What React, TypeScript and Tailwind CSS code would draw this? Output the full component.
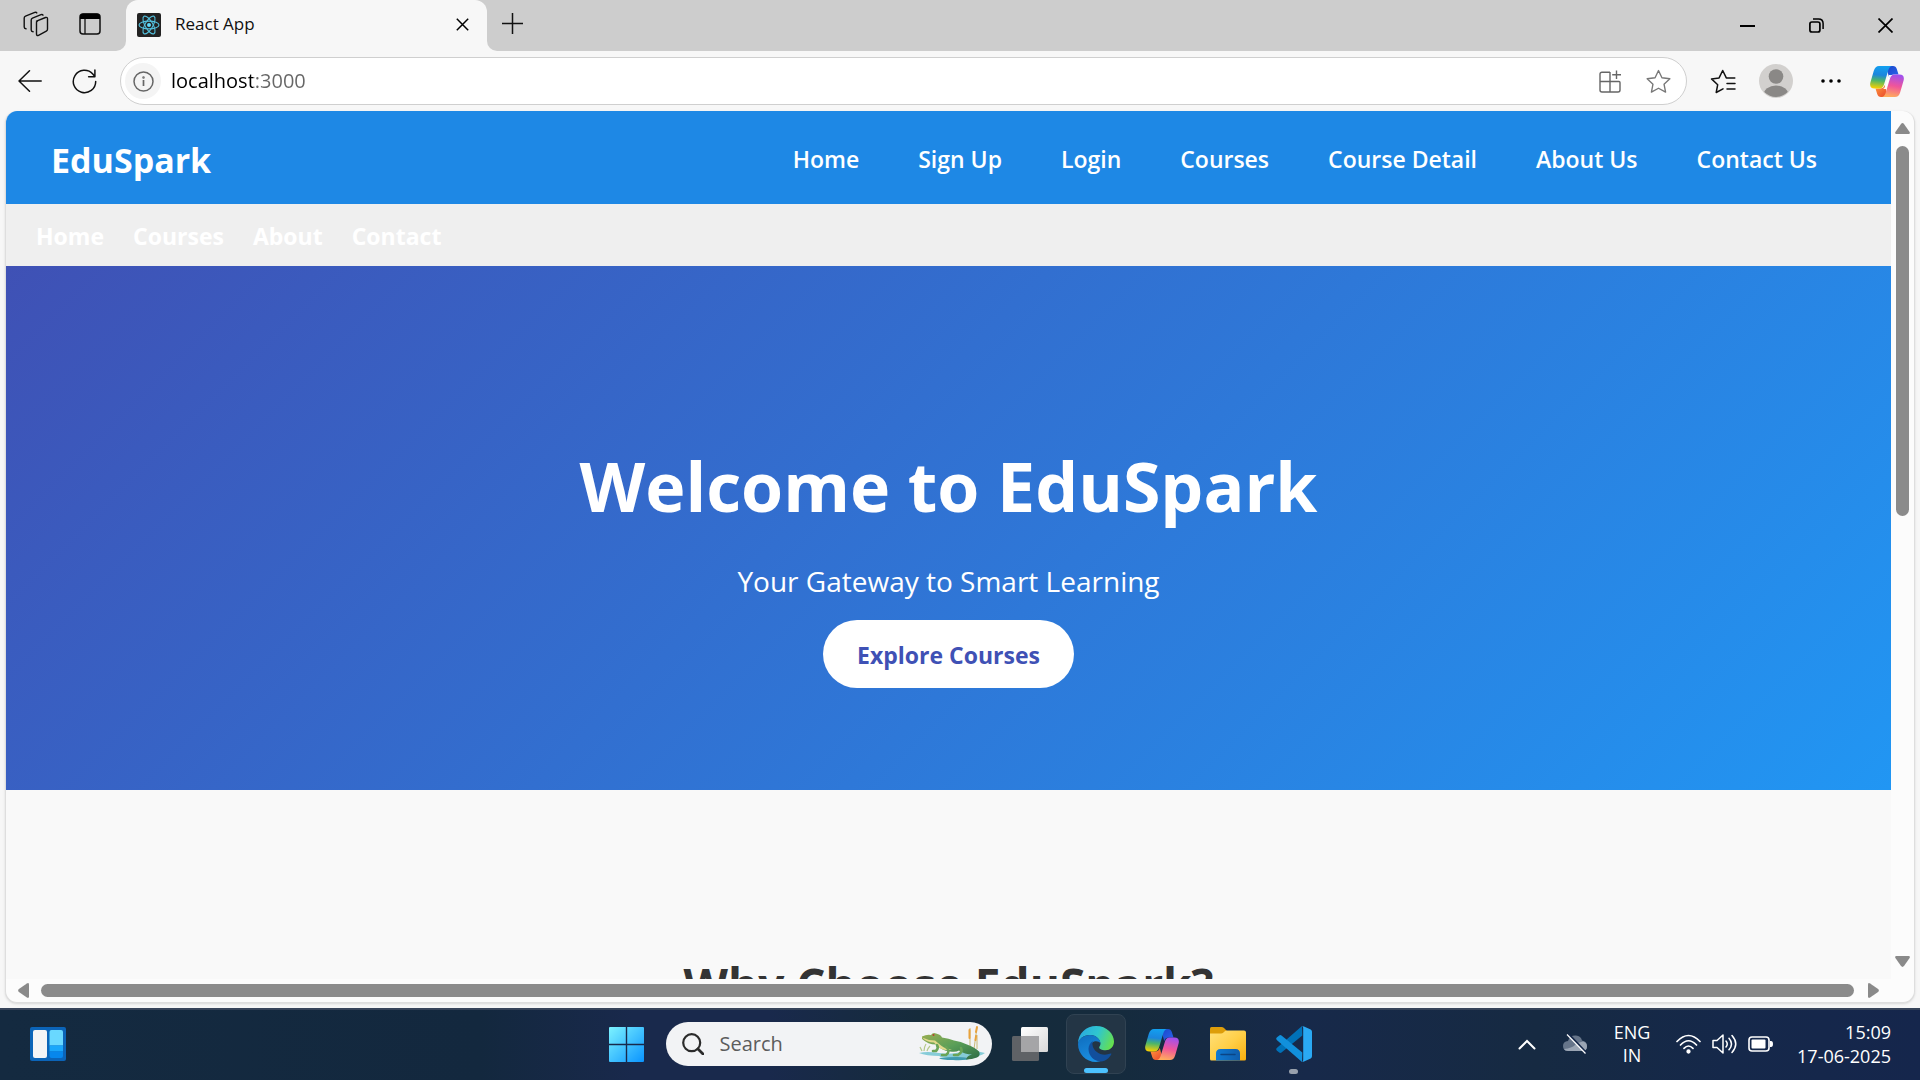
import type { ReactNode } from "react";

type IconButtonProps = { label: string; className: string; children: ReactNode };

function IconButton({ label, className, children }: IconButtonProps) {
  return (
    <button type="button" aria-label={label} className={`flex shrink-0 items-center justify-center ${className}`}>
      {children}
    </button>
  );
}

function CopilotLogo({ id }: { id: string }) {
  return (
    <svg width="34" height="31" viewBox="0 0 34 31" aria-hidden="true">
      <defs>
        <linearGradient id={`${id}-a`} x1="0.5" y1="0" x2="0.4" y2="1">
          <stop offset="0" stopColor="#12a0f0" />
          <stop offset="0.4" stopColor="#1b86dd" />
          <stop offset="0.65" stopColor="#4cb56a" />
          <stop offset="1" stopColor="#f8d000" />
        </linearGradient>
        <linearGradient id={`${id}-b`} x1="0.6" y1="0" x2="0.4" y2="1">
          <stop offset="0" stopColor="#a050ee" />
          <stop offset="0.5" stopColor="#f0559a" />
          <stop offset="1" stopColor="#ffad5c" />
        </linearGradient>
        <linearGradient id={`${id}-c`} x1="0" y1="0" x2="1" y2="1">
          <stop offset="0" stopColor="#1a45c8" />
          <stop offset="1" stopColor="#2a66ee" />
        </linearGradient>
        <linearGradient id={`${id}-d`} x1="0" y1="0" x2="1" y2="1">
          <stop offset="0" stopColor="#ff9a3c" />
          <stop offset="1" stopColor="#e8432e" />
        </linearGradient>
      </defs>
      <path d="M16 0h7c2 0 3.200 1.200 3.800 3l1.700 5.500h-4.500c-2.500 0-4 1-4.800 3.500z" fill={`url(#${id}-c)`} />
      <path d="M18 31h-7c-2 0-3.200-1.200-3.800-3L5.500 22.500H10c2.500 0 4-1 4.800-3.500z" fill={`url(#${id}-d)`} />
      <path d="M9 0h13c-2 .4-3 2-3.700 4.300L14 18.500c-.8 2.700-2.200 4-4.600 4H4.500C.8 22.500-.5 20 .4 16.500L3.800 4.800C4.800 1.500 6.500 0 9 0z" fill={`url(#${id}-a)`} />
      <path d="M25 31H12c2-.4 3-2 3.700-4.300L20 12.500c.8-2.700 2.200-4 4.600-4h4.900c3.700 0 5 2.500 4.100 6l-3.400 11.700C29.200 29.500 27.500 31 25 31z" fill={`url(#${id}-b)`} />
      <path d="M19 9h3q-1.800.8-2.400 2.800L16 23q-.4 0-3 0 1.500-.8 2.200-2.800z" fill="#fff" fillOpacity={id === "cp-toolbar" ? 0.95 : 0} />
    </svg>
  );
}

function ReactFavicon() {
  return (
    <svg width="24" height="24" viewBox="0 0 24 24" className="shrink-0" aria-hidden="true">
      <rect width="24" height="24" rx="2" fill="#222" />
      <g fill="none" stroke="#53c1de" strokeWidth="1.1">
        <ellipse cx="12" cy="12" rx="10" ry="3.900" />
        <ellipse cx="12" cy="12" rx="10" ry="3.900" transform="rotate(60 12 12)" />
        <ellipse cx="12" cy="12" rx="10" ry="3.900" transform="rotate(120 12 12)" />
      </g>
      <circle cx="12" cy="12" r="2" fill="#61dafb" />
    </svg>
  );
}

function TitleBar() {
  return (
    <div className="flex h-[51px] shrink-0 items-stretch bg-[#cdcdcd]">
      <div className="flex w-[126px] shrink-0 items-center gap-[22px] rounded-br-[10px] bg-[#cdcdcd] pb-[3px] pl-5">
        <IconButton label="Workspaces" className="size-8">
          <svg width="26" height="26" viewBox="0 0 26 26" fill="none" stroke="#111" strokeWidth="1.400" strokeLinejoin="round" strokeLinecap="round">
            <path d="M13.500 10.200 22.500 6.500q2-.6 2 1.300v10.500q0 1.200-1.200 1.800l-7.800 4.200q-2 .8-2-1.200V11.500q0-1 1-1.400z" />
            <path d="M20 4.200q-.6-1-2-.5L9.500 7.200Q8.200 7.800 8.200 9v10q0 1.600 1.900 1.700" />
            <path d="M14.800 1.700q-.6-1-2-.5L3.500 5Q2.200 5.500 2.200 6.700v9q0 1.700 1.800 1.900" transform="translate(-1 .2)" />
          </svg>
        </IconButton>
        <IconButton label="Tab actions" className="size-8">
          <svg width="22" height="22" viewBox="0 0 22 22">
            <rect x="1" y="1" width="20" height="20" rx="3" fill="none" stroke="#111" strokeWidth="1.500" />
            <path d="M1 6V4q0-3.500 3.500-3.500h13Q21 .5 21 4v2z" fill="#000" />
            <path d="M6 6v15" stroke="#111" strokeWidth="1.300" />
          </svg>
        </IconButton>
      </div>
      <div className="-ml-3 flex bg-[#f7f7f7]">
        <div className="w-3 rounded-br-[10px] bg-[#cdcdcd]" />
      </div>
      <div className="bg-[#cdcdcd]">
        <div className="flex h-full w-[361px] items-center rounded-t-[12px] bg-[#f7f7f7] pr-[13px] pb-[2px] pl-[11px]">
          <ReactFavicon />
          <span className="ml-[14px] flex-1 pb-px text-[17px] leading-6 text-[#111]">React App</span>
          <IconButton label="Close tab" className="size-6">
            <svg width="13" height="13" viewBox="0 0 13 13" stroke="#000" strokeWidth="1.500">
              <path d="m.8.8 11.400 11.400M12.200.8.800 12.200" />
            </svg>
          </IconButton>
        </div>
      </div>
      <div className="flex flex-1 bg-[#f7f7f7]">
        <div className="flex flex-1 items-center rounded-bl-[10px] bg-[#cdcdcd] pl-[9px]">
          <IconButton label="New tab" className="size-8 pb-1">
            <svg width="21" height="21" viewBox="0 0 21 21" stroke="#111" strokeWidth="1.500">
              <path d="M10.500 0v21M0 10.500h21" />
            </svg>
          </IconButton>
          <div className="ml-auto flex">
            <IconButton label="Minimize" className="h-[50px] w-[69px]">
              <svg width="15" height="2"><rect width="15" height="2" /></svg>
            </IconButton>
            <IconButton label="Restore" className="h-[50px] w-[69px]">
              <svg width="15" height="15" viewBox="0 0 15 15" fill="none" stroke="#000" strokeWidth="1.700">
                <rect x=".9" y="4" width="10" height="10" rx="2" />
                <path d="M4 1h5.500q4.600 0 4.600 4.600V11" strokeWidth="1.500" />
              </svg>
            </IconButton>
            <IconButton label="Close" className="h-[50px] w-[69px]">
              <svg width="15" height="15" viewBox="0 0 15 15" stroke="#000" strokeWidth="1.700">
                <path d="m.5.5 14 14m0-14-14 14" />
              </svg>
            </IconButton>
          </div>
        </div>
      </div>
    </div>
  );
}

const starPath = "m12 1.500 3.300 6.900 7.600 1-5.600 5.200 1.500 7.600-6.800-3.700-6.800 3.700 1.500-7.600L1.100 9.400l7.600-1z";

function Toolbar() {
  return (
    <div className="flex h-[60px] shrink-0 items-center bg-[#f7f7f7] pr-[15px] pl-[14px]">
      <IconButton label="Back" className="size-8">
        <svg width="24" height="22" viewBox="0 0 24 22" fill="none" stroke="#111" strokeWidth="1.500" strokeLinecap="round" strokeLinejoin="round">
          <path d="M23.200 11H1M11.500.8 1 11l10.500 10.200" />
        </svg>
      </IconButton>
      <IconButton label="Refresh" className="ml-[22px] size-8">
        <svg width="25" height="25" viewBox="0 0 25 25" fill="none" stroke="#111" strokeWidth="1.500" strokeLinecap="round" strokeLinejoin="round">
          <path d="M23.700 12.500A11.200 11.200 0 1 1 20.800 5L22.800 7.500M22.900 1v6.800h-6.300" />
        </svg>
      </IconButton>
      <div className="ml-5 flex h-12 flex-1 items-center rounded-full border border-[#cfcfcf] bg-white pr-3 pl-1">
        <IconButton label="View site information" className="size-9 rounded-full bg-[#f4f4f4]">
          <svg width="21" height="21" viewBox="0 0 21 21" fill="none" stroke="#666" strokeWidth="1.500">
            <circle cx="10.500" cy="10.500" r="9.500" />
            <path d="M10.500 9v6" strokeWidth="1.700" />
            <circle cx="10.500" cy="6.500" r=".5" />
          </svg>
        </IconButton>
        <input
          aria-label="Address"
          defaultValue="localhost:3000"
          className="ml-[10px] min-w-0 flex-1 bg-[linear-gradient(to_right,#000_82px,#666_82px)] bg-clip-text text-[20px] leading-7 text-transparent outline-none"
        />
        <IconButton label="App available" className="size-8">
          <svg width="23" height="23" viewBox="0 0 23 23" fill="none" stroke="#666" strokeWidth="1.400">
            <path d="M11 2.200H3q-2 0-2 2V20q0 2 2 2h16q2 0 2-2v-7.500q0-1-1-1H1M11 1.900V22M17.500.5v8.600M13.200 4.800H22" />
          </svg>
        </IconButton>
        <IconButton label="Add to favorites" className="ml-4 size-8">
          <svg width="25" height="25" viewBox="0 0 24 24" fill="none" stroke="#777" strokeWidth="1.300" strokeLinejoin="round"><path d={starPath} /></svg>
        </IconButton>
      </div>
      <IconButton label="Favorites" className="ml-[18px] size-9">
        <svg width="26" height="25" viewBox="0 0 26 25" fill="none" stroke="#111" strokeWidth="1.500" strokeLinejoin="round" strokeLinecap="round">
          <path d="M13 19.800 6.200 23.500l1.500-7.800L1.500 9.900l7.600-1L12.700 1.500l3.600 7.400h8.500M17 14.500h8M17 20h8" />
        </svg>
      </IconButton>
      <IconButton label="Profile" className="ml-[17px] size-9">
        <svg width="34" height="34" viewBox="0 0 34 34">
          <clipPath id="avatar"><circle cx="17" cy="17" r="16" /></clipPath>
          <circle cx="17" cy="17" r="17" fill="#d2d0ce" />
          <circle cx="17" cy="12.500" r="7.300" fill="#8a8886" />
          <ellipse cx="17" cy="31" rx="12.500" ry="9.500" fill="#8a8886" clipPath="url(#avatar)" />
        </svg>
      </IconButton>
      <IconButton label="Settings and more" className="ml-[19px] size-9">
        <svg width="20" height="4" viewBox="0 0 20 4"><circle cx="2" cy="2" r="1.800" /><circle cx="10" cy="2" r="1.800" /><circle cx="18" cy="2" r="1.800" /></svg>
      </IconButton>
      <IconButton label="Copilot" className="ml-5 size-9"><CopilotLogo id="cp-toolbar" /></IconButton>
    </div>
  );
}

const mainLinks = ["Home", "Sign Up", "Login", "Courses", "Course Detail", "About Us", "Contact Us"];
const subLinks = ["Home", "Courses", "About", "Contact"];

function WebPage() {
  return (
    <div className="min-w-0 flex-1 overflow-hidden bg-[#f9f9f9]">
      <header className="flex h-[93px] items-center justify-between bg-[#1e88e5] pr-[74px] pl-[45px] text-white">
        <a href="#home" className="pt-1 text-[34px] leading-[44px] font-bold">EduSpark</a>
        <nav aria-label="Main" className="pt-[3px]">
          <ul className="flex gap-[59px]">
            {mainLinks.map((t) => (
              <li key={t}><a href="#page" className="text-[23px] leading-8 font-semibold">{t}</a></li>
            ))}
          </ul>
        </nav>
      </header>
      <nav aria-label="Secondary" className="h-[62px] bg-[#efefef] pt-4 pl-[30px]">
        <ul className="flex gap-[29px]">
          {subLinks.map((t) => (
            <li key={t}><a href="#page" className="text-[23px] leading-8 font-bold text-white">{t}</a></li>
          ))}
        </ul>
      </nav>
      <section className="flex h-[524px] flex-col items-center bg-[linear-gradient(135deg,#3f51b5,#2196f3)] pt-[172px] text-center text-white">
        <h1 className="text-[68px] leading-[96px] font-bold">Welcome to EduSpark</h1>
        <p className="mt-[27px] text-[28px] leading-10">Your Gateway to Smart Learning</p>
        <a href="#courses" className="mt-[19px] rounded-full bg-white px-[34px] pt-[19px] pb-[17px] text-[23px] leading-8 font-bold text-[#3f51b5]">Explore Courses</a>
      </section>
      <section className="pt-[162px] text-center">
        <h2 className="text-[46px] leading-[64px] font-bold text-[#333]">Why Choose EduSpark?</h2>
      </section>
    </div>
  );
}

function Arrow({ turn }: { turn: string }) {
  return (
    <svg width="15" height="11" viewBox="0 0 15 11" className={`shrink-0 ${turn}`} aria-hidden="true">
      <path d="M6 .9q1.500-1.600 3 0l5.600 8q.9 2-1 2.100H1.400q-1.900-.1-1-2.100z" fill="#8a8a8a" />
    </svg>
  );
}

function Viewport() {
  return (
    <div className="min-h-0 flex-1 bg-[#f7f7f7] px-[5px] pb-[5px]">
      <div className="flex h-full flex-col overflow-hidden rounded-xl border-x border-b border-[#dedede] bg-[#fcfcfc] shadow-sm">
        <div className="flex min-h-0 flex-1">
          <WebPage />
          <div className="flex w-[23px] shrink-0 flex-col items-center pt-3 pb-3">
            <Arrow turn="rotate-0" />
            <div className="mt-3 w-[13px] flex-[370] rounded-full bg-[#8b8b8b]" />
            <div className="flex-[440]" />
            <Arrow turn="rotate-180" />
          </div>
        </div>
        <div className="flex h-[23px] shrink-0 items-center pr-[33px] pl-[10px]">
          <Arrow turn="-rotate-90" />
          <div className="mr-3 ml-[10px] h-[13px] flex-1 rounded-full bg-[#8b8b8b]" />
          <Arrow turn="rotate-90" />
        </div>
      </div>
    </div>
  );
}

function Crocodile() {
  return (
    <svg width="68" height="38" viewBox="0 0 68 38" className="shrink-0" aria-hidden="true">
      <defs>
        <linearGradient id="croc" x1="0" y1="0" x2="1" y2="1">
          <stop offset="0" stopColor="#9aae52" /><stop offset=".5" stopColor="#5a9f58" /><stop offset="1" stopColor="#2e6b45" />
        </linearGradient>
      </defs>
      <path d="M1 28q8-2 20 0t22-1 24 1q-6 4-14 3-6 2-22 2-12-1-9-2Q8 31 1 28z" fill="#86ccd8" />
      <path d="M21 33q18-2 34 0-8 3-20 2-12 0-14-2z" fill="#3f9bb0" />
      <path d="M6 26q0-4 2-7m1 7q1-3 3-5m-8 5-2-4" stroke="#b5c98a" strokeWidth="1.200" fill="none" />
      <path d="M52 22V3M56 24 59 2M59 24V10" stroke="#c9b878" strokeWidth="1" fill="none" />
      <path d="M51.500 5v8M59 2l-1 5M58 11l-.5 4" stroke="#e8a23c" strokeWidth="2" strokeLinecap="round" />
      <path d="M4 11.500q5-2.500 9-1.500 2-3 5-1.500 5 1 6 4 7 1 12 3 7 1 13 4 8 3 12 7 2 4-2 6-5 2-11 2 1-4 6-5-7 0-13-4-3 2-9 1-9-1-14-7-8 0-14-5.500z" fill="url(#croc)" />
      <path d="M4 12.500q6 3 13 3l6 5q5 4 11 4-8 2-13-2l-5-5q-7 0-12-5z" fill="#e3d98c" />
      <path d="M19 20q2 3-1 6h-3M28 22q5 4 0 8h-4M43 23q2 4-3 7h-4" stroke="#6aa458" strokeWidth="2.600" fill="none" strokeLinecap="round" />
      <circle cx="15.500" cy="10" r="1" fill="#b8402e" />
    </svg>
  );
}

function EdgeLogo() {
  return (
    <svg width="36" height="36" viewBox="0 0 36 36" aria-hidden="true">
      <defs>
        <linearGradient id="edge-top" x1="0" y1=".3" x2="1" y2=".6">
          <stop offset="0" stopColor="#2aa9e0" /><stop offset=".5" stopColor="#2fc6cf" /><stop offset="1" stopColor="#66e04e" />
        </linearGradient>
        <linearGradient id="edge-left" x1="0" y1="0" x2=".4" y2="1">
          <stop offset="0" stopColor="#0f6cbd" /><stop offset="1" stopColor="#1a8ee0" />
        </linearGradient>
      </defs>
      <path d="M0 18C0 7 8.500 0 18 0c11 0 18 8 18 15.500 0 5-3.500 8.800-8.500 8.800-4 0-6.300-1.500-6.300-2.700 0-1 1.300-1.400 1.300-4 0-3.500-4-8.500-10.500-8.500C5.500 9 1 13 0 18z" fill="url(#edge-top)" />
      <path d="M0 18C.5 12.500 6 9 12 9c6.500 0 10.500 5 10.500 8.500-2-3.500-10-3.500-10 4.500 0 7 6 12 12 12-2 1.300-4.500 2-6.500 2C8 36 0 28 0 18z" fill="url(#edge-left)" />
      <path d="M15 15c-3 1.500-4.500 5-4.500 8 0 7 6 12.500 12.500 12.500 5 0 8.500-4 10.300-7.200.3-.7-.2-1-.7-.8C24 31 15.500 26 14.500 19c-.2-1.500 0-3 .5-4z" fill="#124f9c" />
    </svg>
  );
}

function Taskbar() {
  return (
    <footer className="grid h-[72px] shrink-0 grid-cols-[1fr_auto_1fr] items-center border-t-2 border-[#37445a] bg-[linear-gradient(90deg,#142a40_0%,#13283e_25%,#19294c_33%,#19294c_40%,#152b3b_48%,#152b3d_58%,#17294a_68%,#162a42_80%,#15284a_90%,#15264c_100%)] pb-[2px] text-white">
      <div className="pl-[30px]">
        <IconButton label="Widgets" className="h-[34px] w-9">
          <svg width="36" height="34" viewBox="0 0 36 34">
            <rect width="36" height="34" rx="2" fill="#0b64b8" />
            <rect x="3" y="3" width="14" height="28" rx="2" fill="#f4f4f6" />
            <path d="M19.500 5q0-2 2-2h9.500q2 0 2 2v13.500H19.500z" fill="#69d8ff" />
            <path d="M19.500 18.500H33v6H19.500z" fill="#1aa7fb" />
            <path d="M19.500 24.500H33V29q0 2-2 2h-9.500q-2 0-2-2z" fill="#0787ec" />
          </svg>
        </IconButton>
      </div>
      <div className="flex items-center">
        <IconButton label="Start" className="size-[60px]">
          <svg width="35" height="35" viewBox="0 0 35 35">
            <defs><linearGradient id="win" x1="0" y1="0" x2="35" y2="35" gradientUnits="userSpaceOnUse"><stop stopColor="#7df3ff" /><stop offset="1" stopColor="#0a94ff" /></linearGradient></defs>
            <path d="M1 0h15.800v16.800H0V1q0-1 1-1zM18.200 0H34q1 0 1 1v15.800H18.200zM0 18.200h16.800V35H1q-1 0-1-1zM18.200 18.200H35V34q0 1-1 1H18.200z" fill="url(#win)" />
          </svg>
        </IconButton>
        <label className="mr-2 ml-[9px] flex h-11 w-[326px] items-center rounded-full bg-[#f2f3f5] pr-[6px] pl-4">
          <svg width="22" height="22" viewBox="0 0 22 22" fill="none" stroke="#2b2b2b" strokeWidth="2.200" className="shrink-0" strokeLinecap="round">
            <circle cx="9.700" cy="9.700" r="8.500" /><path d="m16 16 5 5" strokeWidth="2.800" />
          </svg>
          <input type="text" aria-label="Search" placeholder="Search" className="ml-4 min-w-0 flex-1 text-[20px] leading-7 text-[#222] outline-none placeholder:text-[#5c5c5c]" />
          <Crocodile />
        </label>
        <div className="flex gap-[6px]">
          <IconButton label="Task view" className="size-[60px]">
            <svg width="36" height="34" viewBox="0 0 36 34">
              <defs><linearGradient id="tv" x1="0" y1="0" x2="1" y2="1"><stop stopColor="#fff" /><stop offset="1" stopColor="#d8d8d8" /></linearGradient></defs>
              <rect y="9" width="27" height="25" rx="1.500" fill="#5f6266" />
              <rect x="9" width="27" height="25" rx="1.500" fill="url(#tv)" />
              <path d="M9 9h18v16H9z" fill="#a5a5a7" />
            </svg>
          </IconButton>
          <IconButton label="Microsoft Edge" className="relative size-[60px] rounded-lg border border-[#304252] bg-[#233545]">
            <EdgeLogo />
            <span className="absolute bottom-0 h-[5px] w-6 rounded-full bg-[#4cc2ff]" />
          </IconButton>
          <IconButton label="Copilot" className="size-[60px]"><CopilotLogo id="cp-task" /></IconButton>
          <IconButton label="File Explorer" className="size-[60px]">
            <svg width="36" height="34" viewBox="0 0 36 34">
              <defs>
                <linearGradient id="fold" x1="0" y1="0" x2="1" y2="1"><stop stopColor="#ffe07a" /><stop offset=".5" stopColor="#ffcf48" /><stop offset="1" stopColor="#f9ae0c" /></linearGradient>
                <linearGradient id="tray" x1="0" y1="0" x2="1" y2="0"><stop stopColor="#0f7bd4" /><stop offset="1" stopColor="#0f5cab" /></linearGradient>
              </defs>
              <path d="M0 1.500Q0 0 1.500 0h10q1.500 0 2.500 1l2.500 2.500V9H0z" fill="#dd9d0a" />
              <path d="M0 6.500h11q1.500 0 2.500-1l1-1q1-1 2.500-1h17q2 0 2 2V32q0 1.500-1.500 1.500h-33Q0 33.500 0 32z" fill="url(#fold)" />
              <path d="M6 33.500v-7q0-4.500 4.500-4.500h15q4.500 0 4.500 4.500v7z" fill="url(#tray)" />
              <path d="M11 27.500h14" stroke="#0b4484" strokeWidth="1.500" strokeLinecap="round" />
            </svg>
          </IconButton>
          <IconButton label="Visual Studio Code" className="relative size-[60px]">
            <svg width="36" height="36" viewBox="0 0 36 36">
              <path d="m26 0 .3 9.500L5.500 26.600q-1.200.9-2.300 0L.8 24.500q-1.200-1.200 0-2.400z" fill="#0071b8" />
              <path d="m26 36 .3-9.500L5.500 9.400q-1.200-.9-2.300 0L.8 11.500q-1.200 1.200 0 2.400z" fill="#1190dc" />
              <path d="M26.200 35.800Q27.200 35 27.200 34V2q0-1-1-1.800Q27 0 28 .4l6.700 3.200Q36 4.300 36 5.700v24.600q0 1.400-1.300 2.100L28 35.600q-1 .4-1.800.2z" fill="#2aa9f4" />
            </svg>
            <span className="absolute bottom-0 h-[5px] w-[9px] rounded-full bg-[#98a0ac]" />
          </IconButton>
        </div>
      </div>
      <div className="flex items-center justify-end pr-[29px]">
        <IconButton label="Show hidden icons" className="size-8">
          <svg width="18" height="11" viewBox="0 0 18 11" fill="none" stroke="#fff" strokeWidth="2" strokeLinecap="round"><path d="m1.500 9.500 7.500-7.500 7.500 7.500" /></svg>
        </IconButton>
        <IconButton label="OneDrive" className="ml-4 size-8">
          <svg width="26" height="22" viewBox="0 0 26 22">
            <path d="M6 8q2-6 8-5.500 5 .5 6 5 5 .8 5 5.500 0 5-5 5H6q-5 0-5-5 0-4.500 5-5z" fill="#66758a" />
            <path d="M2 16q8-1 11-4 3-3 8-3.500 4 1 4 5 0 4.500-5 4.500H6q-3 0-4-2z" fill="#9aa5b4" />
            <path d="m6.500 1 18 19" stroke="#15284a" strokeWidth="2" /><path d="m5 1.500 18.500 19" stroke="#fff" strokeWidth="1.200" />
          </svg>
        </IconButton>
        <button type="button" className="ml-[21px] w-10 text-center text-[18px] leading-[23px]">ENG<br />IN</button>
        <button type="button" aria-label="Network, volume and battery" className="ml-6 flex items-center gap-[11px]">
          <svg width="25" height="20" viewBox="0 0 25 20" fill="none" stroke="#fff" strokeWidth="1.700" strokeLinecap="round">
            <path d="M1 7.500q11.500-12 23 0M4.500 11q8-8.500 16 0M8 14.300q4.500-4.600 9 0" /><circle cx="12.500" cy="17.500" r="1.300" fill="#fff" />
          </svg>
          <svg width="25" height="20" viewBox="0 0 25 20" fill="none" stroke="#fff" strokeWidth="1.500" strokeLinecap="round" strokeLinejoin="round">
            <path d="M1 6.500h4l6-5.500v18l-6-5.500H1zM14 7q2.500 3 0 6M17 4.200q5 5.800 0 11.600M20 1.500q7.500 8.500 0 17" />
          </svg>
          <svg width="25" height="16" viewBox="0 0 25 16">
            <rect x="1" y="1" width="20" height="14" rx="3" fill="none" stroke="#fff" strokeWidth="1.600" /><rect x="3.500" y="3.500" width="14" height="9" rx="1" fill="#fff" /><path d="M22 5h1q2 0 2 3t-2 3h-1z" fill="#fff" />
          </svg>
        </button>
        <button type="button" className="ml-6 text-right text-[18px] leading-6">15:09<br />17-06-2025</button>
      </div>
    </footer>
  );
}

export default function App() {
  return (
    <div className="flex h-screen flex-col overflow-hidden bg-[#f7f7f7] font-['Open_Sans',sans-serif]">
      <TitleBar />
      <Toolbar />
      <Viewport />
      <Taskbar />
    </div>
  );
}
